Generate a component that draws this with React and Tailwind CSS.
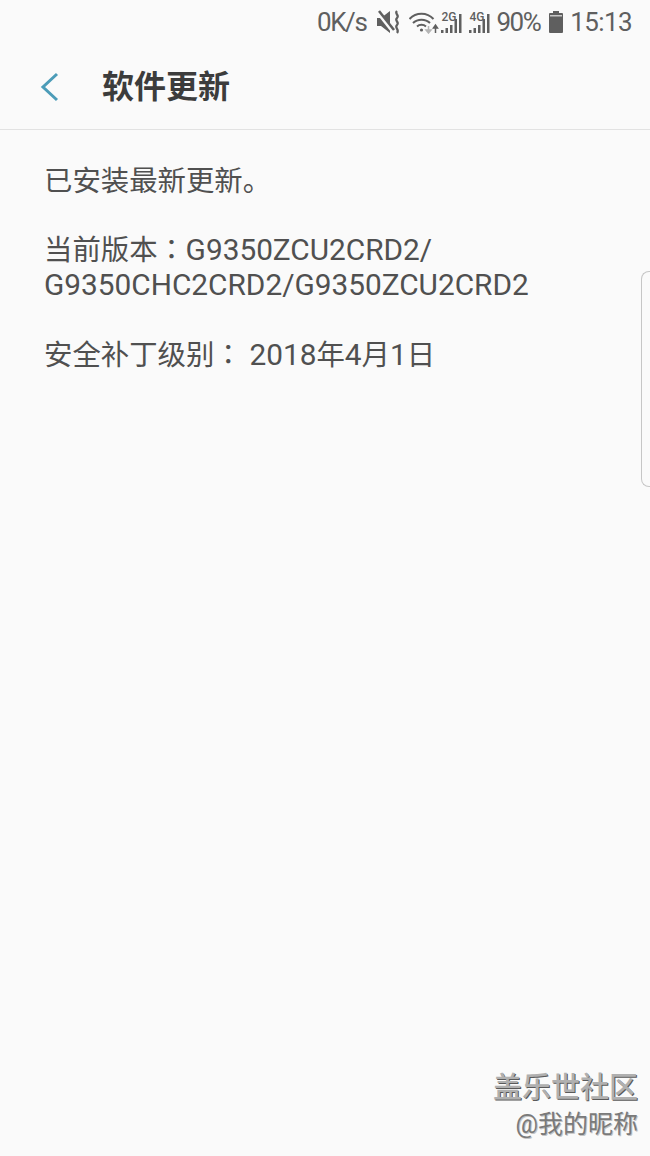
const cjk = "font-['Roboto','Noto_Sans_CJK_SC',sans-serif]";

const MuteIcon = () => (
  <svg width="25" height="24" viewBox="0 0 25 24" fill="#5f5f5f">
    <path d="M1 8h4l9-7v22l-9-7H1z" />
    <path d="M1 1.500l15 19" stroke="#fafafa" strokeWidth="3.500" />
    <path d="M3 1l15 19" stroke="#5f5f5f" strokeWidth="2.500" />
    <path d="M21 1c-3 3 3 4 0 7s3 4 0 7 3 4 0 8" fill="none" stroke="#5f5f5f" strokeWidth="2.200" />
  </svg>
);

const WifiIcon = () => (
  <svg width="30" height="24" viewBox="0 0 30 24" fill="none">
    <path d="M0.500 9c6.500-7 17.500-7 24 0" stroke="#5f5f5f" strokeWidth="2" />
    <path d="M4 13c4.500-4.500 12.500-4.500 17 0" stroke="#5f5f5f" strokeWidth="2" />
    <path d="M8 16.500c2.500-2.200 6.500-2.200 9 0" stroke="#5f5f5f" strokeWidth="2" />
    <circle cx="12.500" cy="20" r="1.600" fill="#5f5f5f" />
    <path d="M19.500 16v5M17 20l2.500 3 2.500-3z" stroke="#b5b5b5" strokeWidth="1.500" fill="#b5b5b5" />
    <path d="M26.500 23v-6M24.500 18l2-3 2 3z" stroke="#5f5f5f" strokeWidth="1.500" fill="#5f5f5f" />
  </svg>
);

const SignalIcon = ({ label }) => (
  <div className="relative w-[22px] h-[24px]">
    <svg width="22" height="24" viewBox="0 0 22 24" fill="#5f5f5f" className="absolute left-0 top-0">
      <rect x="0" y="20" width="2.500" height="3" />
      <rect x="4.500" y="18" width="2.500" height="5" />
      <rect x="9" y="15" width="2.500" height="8" />
      <rect x="13.500" y="9" width="2.500" height="14" />
      <rect x="18" y="4" width="2.500" height="19" />
    </svg>
    <span className="absolute left-0 top-[1px] text-[12px] leading-[12px] font-medium tracking-normal text-[#5f5f5f] font-['Roboto',sans-serif]">
      {label}
    </span>
  </div>
);

const BatteryIcon = () => (
  <svg width="16" height="24" viewBox="0 0 16 24" fill="#5f5f5f">
    <rect x="5" y="1" width="6" height="3" />
    <rect x="1" y="3" width="14" height="20" rx="1" />
    <rect x="2" y="5" width="12" height="1.500" fill="#c8c8c8" />
  </svg>
);

const StatusBar = () => (
  <div className="h-[44px] flex items-center justify-end pr-[18px] text-[26px] text-[#5f5f5f] font-['Roboto',sans-serif]">
    <span className="tracking-[-1.4px]">0K/s</span>
    <div className="ml-[10px]"><MuteIcon /></div>
    <div className="ml-[8px]"><WifiIcon /></div>
    <div className="ml-[2px]"><SignalIcon label="2G" /></div>
    <div className="ml-[6px]"><SignalIcon label="4G" /></div>
    <span className="ml-[5px] tracking-[-1.5px]">90%</span>
    <div className="ml-[8px]"><BatteryIcon /></div>
    <span className="ml-[6px] tracking-[-0.6px]">15:13</span>
  </div>
);

// the digits and latin letters run a little bigger than the chinese
const Latin = ({ children }) => <span className="text-[29.8px] leading-[28px]">{children}</span>;
const Colon = () => <span className="text-[28px] leading-[28px] font-['Noto_Sans_CJK_TC',sans-serif]">：</span>;

export default function App() {
  return (
    <div className={`relative w-[650px] h-[1156px] overflow-hidden bg-[#fafafa] ${cjk}`}>
      <StatusBar />

      {/* header */}
      <div className="h-[86px] flex items-center border-b border-[#e2e2e2]">
        <svg width="20" height="30" viewBox="0 0 20 30" fill="none" className="ml-[40px]">
          <path d="M17 2L3 15l14 13" stroke="#4c9cb8" strokeWidth="3" />
        </svg>
        <h1 className="ml-[42px] text-[32px] font-bold text-[#3c3c3c]">软件更新</h1>
      </div>

      {/* body */}
      <div className="pt-[34px] px-[44px] text-[28.4px] leading-[35px] text-[#505050]">
        <p>已安装最新更新。</p>
        <p className="mt-[35px] leading-[34px]">当前版本<Colon /><Latin>G9350ZCU2CRD2/</Latin></p>
        <p><Latin>G9350CHC2CRD2/G9350ZCU2CRD2</Latin></p>
        <p className="mt-[35px]">安全补丁级别<Colon /> <Latin>2018</Latin>年<Latin>4</Latin>月<Latin>1</Latin>日</p>
      </div>

      {/* edge handle */}
      <div className="absolute right-0 top-[271px] w-[9px] h-[216px] border border-r-0 border-[#c6c6c6] rounded-l-[8px]" />

      {/* watermark */}
      <div className="absolute right-[12px] top-[1069px] flex flex-col items-end">
        <span className="text-[29px] leading-[38px] font-medium text-[#b0b0b0] [text-shadow:1px_1px_0_#5a5a5a]">盖乐世社区</span>
        <span className="text-[25px] leading-[36px] text-[#7a7a7a] [text-shadow:1px_1px_0_#c4c4c4]">@我的昵称</span>
      </div>
    </div>
  );
}
